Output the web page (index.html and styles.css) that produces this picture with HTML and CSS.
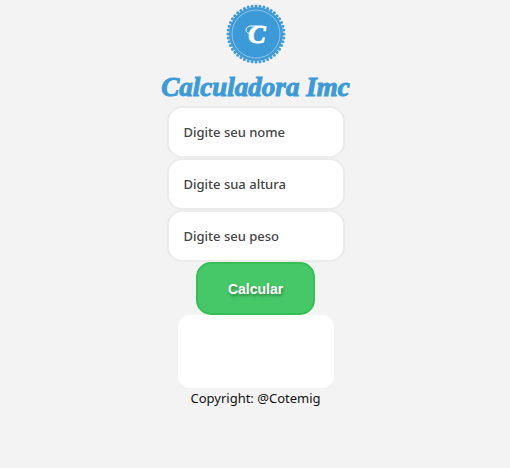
FILE: index.html
```html
<!DOCTYPE html>
<html lang="pt-BR">
<head>
<meta charset="utf-8">
<meta name="viewport" content="width=device-width, initial-scale=1">
<title>Calculadora Imc</title>
<link rel="stylesheet" href="styles.css">
</head>
<body>
<header class="header">
  <svg class="badge" viewBox="0 0 60 60" aria-hidden="true">
    <circle class="badge-disc" cx="30" cy="30" r="27"/>
    <circle class="badge-teeth" cx="30" cy="30" r="28" pathLength="176"/>
    <circle class="badge-ring" cx="30" cy="30" r="24"/>
    <path class="badge-swash" d="M25 29c-3 1-5-1-5-3s2-4 5-4h6"/>
    <text class="badge-letter" x="31" y="39">C</text>
  </svg>
  <h1 class="title">Calculadora Imc</h1>
</header>
<main>
  <form class="form">
    <input class="field" type="text" placeholder="Digite seu nome" aria-label="Nome">
    <input class="field" type="text" placeholder="Digite sua altura" aria-label="Altura">
    <input class="field" type="text" placeholder="Digite seu peso" aria-label="Peso">
    <button class="submit" type="button">Calcular</button>
    <output class="result"></output>
  </form>
</main>
<footer class="footer">Copyright: @Cotemig</footer>
</body>
</html>
```
FILE: styles.css
```css
* {
  box-sizing: border-box;
}

body {
  margin: 0;
  padding: 4px 0 0 1px;
  background: #f3f3f3;
  color: #111;
  font-family: "Noto Sans", sans-serif;
  font-size: 13px;
}

.header,
.form {
  display: flex;
  flex-direction: column;
  align-items: center;
}

.badge {
  width: 60px;
  height: 60px;
}

.badge-disc {
  fill: #3d9ad9;
}

.badge-teeth {
  fill: none;
  stroke: #3d9ad9;
  stroke-width: 3;
  stroke-linecap: round;
  stroke-dasharray: 0 4;
}

.badge-ring {
  fill: none;
  stroke: #8fc6ee;
  stroke-width: 1;
}

.badge-swash {
  fill: none;
  stroke: #fff;
  stroke-width: 1;
}

.badge-letter {
  fill: #fff;
  stroke: #fff;
  stroke-width: 1;
  font: italic bold 26px "Liberation Serif", serif;
  text-anchor: middle;
}

.title {
  margin: 8px 0 3px;
  color: #3d9ad9;
  font: italic bold 27px/31px "Liberation Serif", serif;
  -webkit-text-stroke: 1px #3d9ad9;
}

.field {
  width: 178px;
  height: 52px;
  padding: 0 15px;
  border: 2px solid #ebebeb;
  border-radius: 15px;
  background: #fff;
  color: #444;
  font: 500 13px "Noto Sans", sans-serif;
}

.field::placeholder {
  color: #444;
  opacity: 1;
}

.submit {
  height: 53px;
  padding: 0 30px;
  border: 2px solid #35bf54;
  border-radius: 15px;
  background: #46c868;
  color: #fff;
  font: bold 14px "Liberation Sans", sans-serif;
  text-shadow: 1px 2px 3px rgba(0, 0, 0, 0.35);
}

.result {
  width: 156px;
  height: 73px;
  border-radius: 12px;
  background: #fff;
}

.footer {
  line-height: 20px;
  text-align: center;
}
```
